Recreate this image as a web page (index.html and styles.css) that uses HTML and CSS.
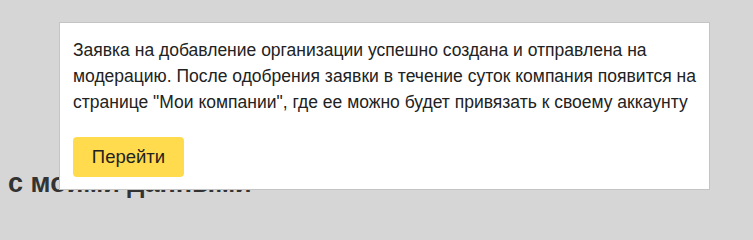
FILE: index.html
```html
<!DOCTYPE html>
<html lang="ru">
<head>
<meta charset="utf-8">
<link rel="stylesheet" href="styles.css">
</head>
<body>
<div class="page">
  <h2 class="heading">с моими данными</h2>
  <div class="popup">
    <p class="message">Заявка на добавление организации успешно создана и отправлена на модерацию. После одобрения заявки в течение суток компания появится на странице "Мои компании", где ее можно будет привязать к своему аккаунту</p>
    <button class="btn">Перейти</button>
  </div>
</div>
</body>
</html>
```

FILE: styles.css
```css
html, body {
  margin: 0;
  padding: 0;
  background: #d6d6d6;
  font-family: "Liberation Sans", Arial, sans-serif;
}
.page {
  position: relative;
  width: 753px;
  height: 214px;
  overflow: hidden;
}
.heading {
  margin: 0;
  padding: 163px 0 0 8px;
  font-size: 27px;
  line-height: 40px;
  font-weight: bold;
  color: #333;
}
.popup {
  position: absolute;
  left: 59px;
  top: 22px;
  width: 628px;
  padding: 14px 8px 12px 13px;
  background: #fff;
  border: 1px solid #c4c4c4;
}
.message {
  margin: 0;
  font-size: 17.5px;
  line-height: 26px;
  color: #222;
}
.btn {
  display: block;
  margin-top: 22px;
  width: 111px;
  height: 40px;
  padding: 0;
  border: 0;
  border-radius: 4px;
  background: #ffdb4d;
  font-family: "Liberation Sans", Arial, sans-serif;
  font-size: 18.5px;
  color: #222;
}
```
